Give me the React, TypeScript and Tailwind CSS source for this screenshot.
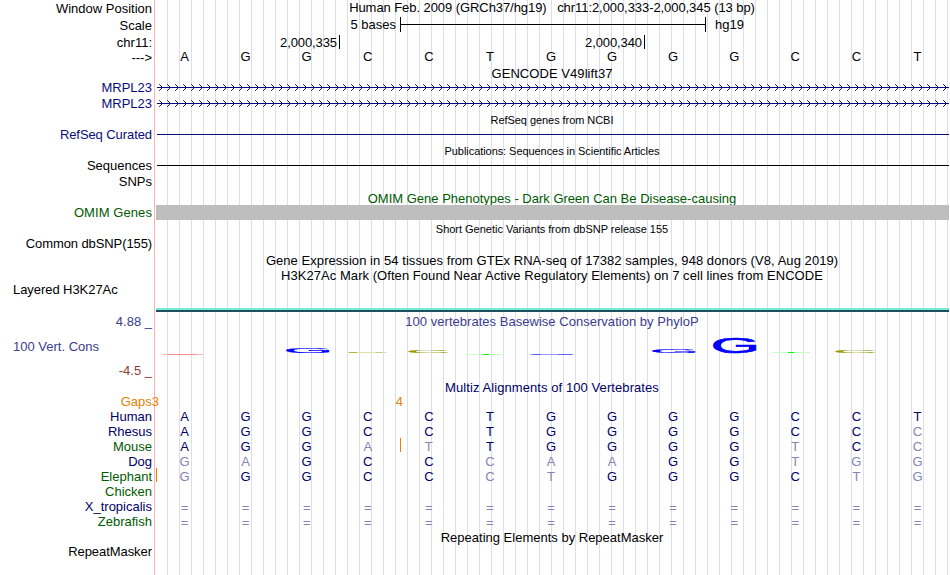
import type { ReactNode } from "react";

const NAVY = "text-[#0c0c78]";
const DARK_NAVY = "text-[#000064]";
const GREEN = "text-[#005a00]";

const alignments = [
  { name: "Human", color: DARK_NAVY, bases: "AGGCCTGGGGCCT", diff: "............." },
  { name: "Rhesus", color: DARK_NAVY, bases: "AGGCCTGGGGCCC", diff: "............x" },
  { name: "Mouse", color: GREEN, bases: "AGGATTGGGGTCC", diff: "...xx.....x.x", insert: "left-[246px]" },
  { name: "Dog", color: DARK_NAVY, bases: "GAGCCCAAGGTGG", diff: "xx...xxx..xxx" },
  { name: "Elephant", color: GREEN, bases: "GGGCCCTGGGCTG", diff: "x....xx....xx", insert: "left-[2px]" },
  { name: "Chicken", color: GREEN, bases: "", diff: "" },
  { name: "X_tropicalis", color: DARK_NAVY, bases: "=============", diff: "xxxxxxxxxxxxx" },
  { name: "Zebrafish", color: GREEN, bases: "=============", diff: "xxxxxxxxxxxxx" },
];

// Letters of the conservation logo, stretched into their boxes
const logo = [
  { base: "G", x: 133, y: 34, w: 42, h: 5.3, color: "#0000ff" },
  { base: "C", x: 255, y: 36, w: 39, h: 3, color: "#999900" },
  { base: "G", x: 499, y: 35, w: 42, h: 4.3, color: "#0000ff" },
  { base: "G", x: 560, y: 24, w: 42, h: 15.6, color: "#0000ff" },
  { base: "C", x: 682, y: 36, w: 39, h: 3, color: "#999900" },
];

// Scores close to zero collapse to a single pixel row
const flat = [
  { x: 9, y: 40, w: 40, color: "#ffb4b4" },
  { x: 14, y: 40, w: 28, color: "#ff8c8c" },
  { x: 193, y: 38, w: 40, color: "#e0e0b0" },
  { x: 195, y: 38, w: 8, color: "#b4b440" },
  { x: 222, y: 38, w: 7, color: "#cccc80" },
  { x: 313, y: 40, w: 37, color: "#c8ffc8" },
  { x: 329, y: 40, w: 6, color: "#00ff00" },
  { x: 376, y: 40, w: 43, color: "#9696ff" },
  { x: 379, y: 40, w: 8, color: "#5a5aff" },
  { x: 404, y: 40, w: 14, color: "#6464ff" },
  { x: 618, y: 38, w: 38, color: "#c8ffc8" },
  { x: 634, y: 38, w: 6, color: "#00ff00" },
];

type RowProps = { label?: string; color?: string; height: string; children?: ReactNode };

function Row({ label, color = "text-black", height, children }: RowProps) {
  return (
    <div className={`flex ${height}`}>
      <div className={`w-[154px] shrink-0 pr-[2px] text-right ${color}`}>{label}</div>
      <div className="relative w-[795px]">{children}</div>
    </div>
  );
}

function Title({ children, className = "" }: { children: ReactNode; className?: string }) {
  return (
    <div className="flex h-[15px] pl-[156px] pr-[2px]">
      <div className={`flex-1 text-center ${className}`}>{children}</div>
    </div>
  );
}

function Bases({ bases, diff = "", color }: { bases: string; diff?: string; color: string }) {
  return (
    <div className="grid w-[794px] grid-cols-13 text-center">
      {bases.split("").map((b, i) => (
        <span
          key={i}
          className={`${diff[i] === "x" ? "text-[#8484b4]" : color} ${b === "=" ? "relative top-px" : ""}`}
        >
          {b}
        </span>
      ))}
    </div>
  );
}

function GeneArrows({ id }: { id: string }) {
  return (
    <svg className="ml-[3px] mt-[4px] block" width="792" height="7" shapeRendering="crispEdges">
      <defs>
        <pattern id={id} width="8" height="7" patternUnits="userSpaceOnUse">
          <path d="M0 3h8v1H0zM4 2h1v1H4zM4 4h1v1H4zM3 1h1v1H3zM3 5h1v1H3z" fill="#0c0c78" />
          <path d="M2 0h1v1H2zM2 6h1v1H2z" fill="#3c3c96" />
        </pattern>
      </defs>
      <rect width="792" height="7" fill={`url(#${id})`} />
    </svg>
  );
}

function Logo() {
  return (
    <svg className="absolute left-0 top-0" width="795" height="66">
      {flat.map((f, i) => (
        <rect key={i} x={f.x} y={f.y} width={f.w} height="1" fill={f.color} />
      ))}
      {logo.map((l, i) => {
        const glyphW = l.base === "G" ? 66.5 : 64;
        return (
          <text
            key={i}
            fontSize="100"
            fill={l.color}
            stroke={l.color}
            strokeWidth="3"
            transform={`translate(${l.x} ${l.y}) scale(${l.w / glyphW} ${l.h / 71.5}) translate(-5 70)`}
          >
            {l.base}
          </text>
        );
      })}
    </svg>
  );
}

export default function App() {
  return (
    <div className="relative h-[575px] w-[950px] overflow-hidden bg-white pt-px font-['Liberation_Sans',Arial,sans-serif] text-[13px] leading-[15px] whitespace-pre text-black">
      {/* Guide lines */}
      <div className="absolute inset-y-0 left-[154px] w-px bg-[#ffb4b4]" />
      <div className="absolute inset-y-0 right-[1px] left-[156px] bg-[repeating-linear-gradient(to_right,transparent_0_11px,#dcdcf8_11px_12px)]" />

      <div className="relative">
        <Row label="Window Position" height="h-[17px]">
          <div className="-mt-px pl-[1px] text-center tracking-[-0.07px]">
            Human Feb. 2009 (GRCh37/hg19)   chr11:2,000,333-2,000,345 (13 bp)
          </div>
        </Row>
        <Row label="Scale" height="h-[17px]">
          <div className="-mt-px flex">
            <span className="w-[246px] pr-[4px] text-right">5 bases</span>
            <span className="flex h-[15px] w-[306px] items-center border-x border-black">
              <span className="h-px w-full bg-black" />
            </span>
            <span className="pl-[9px]">hg19</span>
          </div>
        </Row>
        <Row label="chr11:" height="h-[15px]">
          <div className="-mt-px flex pt-px tracking-[-0.1px]">
            <span className="h-[14px] w-[186px] border-r border-black pr-[2px] text-right">2,000,335</span>
            <span className="h-[14px] w-[305px] border-r border-black pr-[2px] text-right">2,000,340</span>
          </div>
        </Row>
        <Row label="--->" height="h-[16px]">
          <div className="-mt-px">
            <Bases bases="AGGCCTGGGGCCT" color="text-black" />
          </div>
        </Row>

        <Title className="tracking-[0.06px]">GENCODE V49lift37</Title>
        <div className="-mt-px">
          <Row label="MRPL23" color={NAVY} height="h-[16px]">
            <GeneArrows id="arrows-a" />
          </Row>
          <Row label="MRPL23" color={NAVY} height="h-[16px]">
            <GeneArrows id="arrows-b" />
          </Row>
        </div>

        <Title className="pt-px text-[11px] tracking-[-0.06px]">RefSeq genes from NCBI</Title>
        <Row label="RefSeq Curated" color={`${NAVY} tracking-[-0.08px]`} height="h-[16px]">
          <div className="mt-[7px] ml-[3px] h-px bg-[#0c0c78]" />
        </Row>

        <Title className="pt-px text-[11px] tracking-[-0.06px]">
          Publications: Sequences in Scientific Articles
        </Title>
        <Row label="Sequences" height="h-[16px]">
          <div className="mt-[7px] ml-[3px] h-px bg-black" />
        </Row>
        <Row label="SNPs" height="h-[17px]" />

        <Title className={GREEN}>OMIM Gene Phenotypes - Dark Green Can Be Disease-causing</Title>
        <div className="-mt-px">
          <Row label="OMIM Genes" color={`${GREEN} tracking-[0.08px]`} height="h-[16px]">
            <div className="ml-[2px] h-[15px] bg-[#bebebe]" />
          </Row>
        </div>

        <Title className="pt-px text-[11px] tracking-[-0.02px]">Short Genetic Variants from dbSNP release 155</Title>
        <Row label="Common dbSNP(155)" color="text-black tracking-[-0.1px]" height="h-[17px]" />

        <Title className="tracking-[0.055px]">
          Gene Expression in 54 tissues from GTEx RNA-seq of 17382 samples, 948 donors (V8, Aug 2019)
        </Title>
        <Title className="tracking-[0.05px]">
          H3K27Ac Mark (Often Found Near Active Regulatory Elements) on 7 cell lines from ENCODE
        </Title>
        <div className="-mt-px flex h-[32px]">
          <div className="w-[156px] pl-[13px] tracking-[-0.06px]">Layered H3K27Ac</div>
          <div className="mt-[26px] h-[4px] w-[793px] border-b-2 border-[#204f5f] bg-[#70ebcd]" />
        </div>

        <div className="flex h-[66px]">
          <div className="flex w-[154px] flex-col justify-between text-[#3c3c8c]">
            <div className="pr-[2px] text-right">4.88 _</div>
            <div className="pl-[13px]">100 Vert. Cons</div>
            <div className="mb-[2px] pr-[2px] text-right text-[#8c3c3c]">-4.5 _</div>
          </div>
          <div className="relative w-[795px] pl-px text-center tracking-[0.03px] text-[#3c3c8c]">
            100 vertebrates Basewise Conservation by PhyloP
            <Logo />
          </div>
        </div>

        <Title className={`${DARK_NAVY} tracking-[0.08px]`}>Multiz Alignments of 100 Vertebrates</Title>
        <div className="-mt-px flex h-[15px] text-[#e68200]">
          <span className="w-[159px] text-right">Gaps3</span>
          <span className="w-[244px] text-right">4</span>
        </div>
        {alignments.map((a) => (
          <Row key={a.name} label={a.name} color={a.color} height="h-[15px]">
            {a.insert && <span className={`absolute -top-px h-[14px] w-px bg-[#e68200] ${a.insert}`} />}
            <Bases bases={a.bases} diff={a.diff} color={DARK_NAVY} />
          </Row>
        ))}

        <div className="mt-px">
          <Title>Repeating Elements by RepeatMasker</Title>
        </div>
        <div className="-mt-px">
          <Row label="RepeatMasker" color="text-black tracking-[-0.06px]" height="h-[15px]" />
        </div>
      </div>
    </div>
  );
}
